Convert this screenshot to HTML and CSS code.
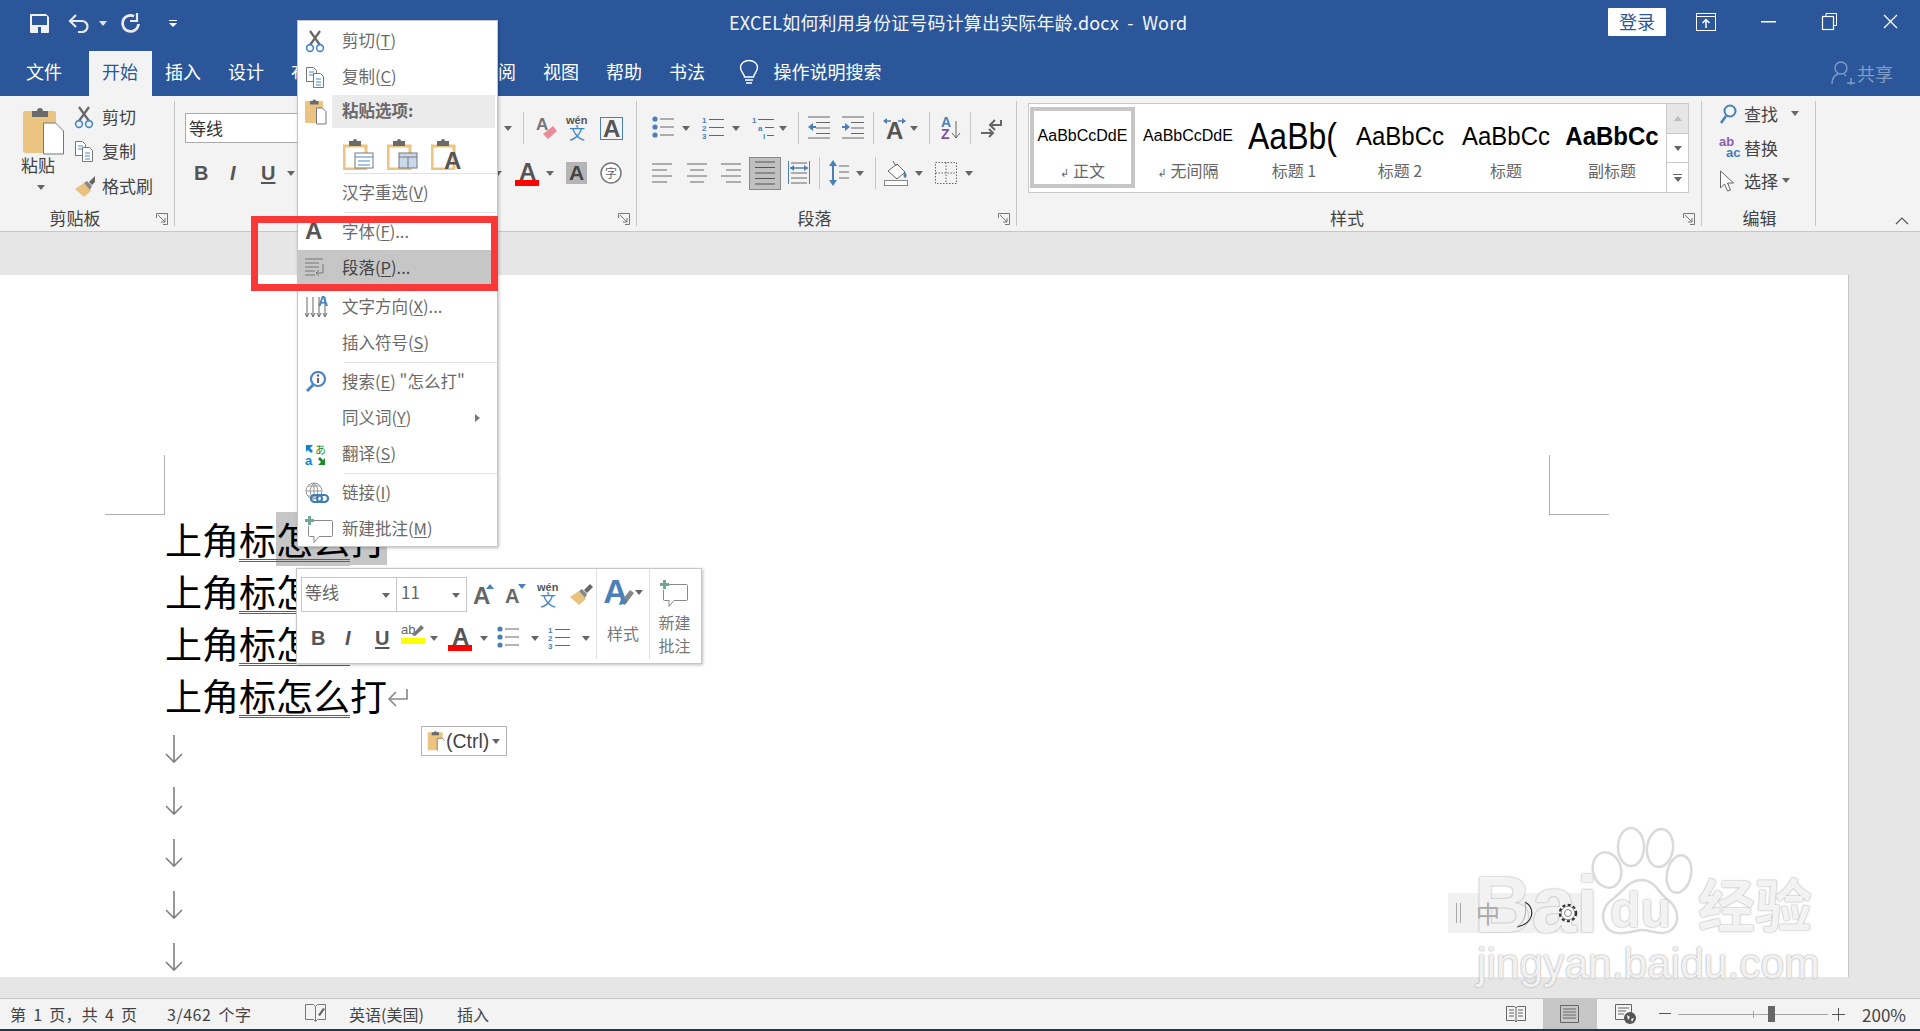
FILE: index.html
```html
<!DOCTYPE html>
<html lang="zh-CN">
<head>
<meta charset="utf-8">
<title>Word</title>
<link rel="stylesheet" href="styles.css">
</head>
<body>
<svg class="defs" width="0" height="0" aria-hidden="true">
  <symbol id="cut"><path d="M5 1l10 14M15 1L5 15" stroke="#666" stroke-width="2.2" fill="none"/><circle cx="5" cy="18" r="3.4" fill="none" stroke="#4a86c5" stroke-width="1.6"/><circle cx="15" cy="18" r="3.4" fill="none" stroke="#4a86c5" stroke-width="1.6"/></symbol>
  <symbol id="copy"><path d="M1.5 1.5h7l3 3v11h-10z" fill="#fff" stroke="#777"/><path d="M4 6h5M4 9h5" stroke="#4a86c5"/><path d="M8.5 7.5h7l3 3v11h-10z" fill="#fff" stroke="#777"/><path d="M11 13h5M11 16h5M11 19h5" stroke="#4a86c5"/></symbol>
  <symbol id="brush"><path d="M1 14l9-6 7 8-7 6z" fill="#e9c27e"/><path d="M10 8l3-2 5 5-2 4z" fill="#888"/><path d="M15 7l6-6 3 3-6 6z" fill="#666"/></symbol>
  <symbol id="pastebig"><rect x="0" y="6" width="33" height="42" rx="2" fill="#ecc481"/><path d="M9 6h5a3 3 0 0 1 6 0h5v6H9z" fill="#6a6a6a"/><path d="M20.5 18h12l8 8v23h-20z" fill="#fff" stroke="#777"/></symbol>
  <symbol id="pastesm"><rect x="0" y="3" width="18" height="22" rx="1" fill="#ecc481"/><path d="M5 3h2.500a1.800 1.800 0 0 1 3.500 0h2.500v3.500H5z" fill="#6a6a6a"/><path d="M11.500 10h6l3.500 3.500V26h-9.500z" fill="#fff" stroke="#777"/></symbol>
  <symbol id="pclip"><path d="M1 10h22v22a1 1 0 0 1-1 1H2a1 1 0 0 1-1-1z" fill="none" stroke="#ecc481" stroke-width="3"/><path d="M6 5h4a2 2 0 0 1 4 0h4v5H6z" fill="#6a6a6a"/></symbol>
  <symbol id="bul"><circle cx="3" cy="3" r="2.600" fill="#4a7fb8"/><circle cx="3" cy="11" r="2.600" fill="#4a7fb8"/><circle cx="3" cy="19" r="2.600" fill="#4a7fb8"/><path d="M8 3h14M8 11h14M8 19h14" stroke="#666"/></symbol>
  <symbol id="numl"><path d="M7 3.500h15M7 11.500h15M7 19.500h15" stroke="#666"/></symbol>
  <symbol id="inddec"><path d="M0 1h22M8 6.500h14M8 12h14M8 17.500h14M0 22h22" stroke="#666"/><path d="M0 11l5-4v3h3v2H5v3z" fill="#4a7fb8"/></symbol>
  <symbol id="indinc"><path d="M0 1h22M9 6.500h13M9 12h13M9 17.500h13M0 22h22" stroke="#666"/><path d="M8 11l-5-4v3H0v2h3v3z" fill="#4a7fb8"/></symbol>
  <symbol id="pil"><path d="M20 2v5H10" fill="none" stroke="#666" stroke-width="2"/><path d="M14 2L9 7l5 5" fill="none" stroke="#666" stroke-width="2"/><path d="M0 15h12M8 11l4 4-4 4" fill="none" stroke="#666" stroke-width="2"/></symbol>
  <symbol id="al"><path d="M0 1h20M0 7h15M0 13h20M0 19h15" stroke="#666"/></symbol>
  <symbol id="ac"><path d="M0 1h20M3 7h14M0 13h20M3 19h14" stroke="#666"/></symbol>
  <symbol id="ar"><path d="M0 1h20M5 7h15M0 13h20M5 19h15" stroke="#666"/></symbol>
  <symbol id="aj"><path d="M0 1h20M0 6.500h20M0 12h20M0 17.500h20M0 23h20" stroke="#555"/></symbol>
  <symbol id="ad"><path d="M.500 0v23M21.500 0v23" stroke="#4a7fb8"/><path d="M3 2h16M3 12h16M3 17h16M3 22h16" stroke="#666"/><path d="M2 7h18" stroke="#4a7fb8" stroke-width="1.500"/><path d="M2 7l4-3v6zM20 7l-4-3v6z" fill="#4a7fb8"/></symbol>
  <symbol id="ls"><path d="M5 3v20" stroke="#4a7fb8" stroke-width="2"/><path d="M5 0L1 6h8zM5 26L1 20h8z" fill="#4a7fb8"/><path d="M11 6h10M11 12h10M11 18h10" stroke="#666"/></symbol>
  <symbol id="shade"><path d="M4 11l9-7 8 8-8 7z" fill="#fff" stroke="#666"/><path d="M9 1l3 5" stroke="#666"/><path d="M21 12c2 2 2 5 0 6-2-1-2-4 0-6z" fill="#4a7fb8"/><rect x=".500" y="20.500" width="23" height="5" fill="#fff" stroke="#888"/></symbol>
  <symbol id="bord"><path d="M.500.500h21v21H.500zM11 .500v21M.500 11h21" fill="none" stroke="#666" stroke-dasharray="1.500 1.500"/></symbol>
  <symbol id="find"><circle cx="11" cy="7" r="5.500" fill="none" stroke="#4a7fb8" stroke-width="2"/><path d="M7 12l-5 7" stroke="#4a7fb8" stroke-width="2.500"/></symbol>
  <symbol id="cursor"><path d="M1.500 1v17l4-4 3 7 3-1-3-7h6z" fill="#fff" stroke="#666"/></symbol>
  <symbol id="comment"><path d="M7.500 4.500h19a1 1 0 0 1 1 1v14a1 1 0 0 1-1 1H14l-5 6v-6H4.500a1 1 0 0 1-1-1V10" fill="#fff" stroke="#888"/><path d="M3 0h3v3h3v3H6v3H3V6H0V3h3z" fill="#6fa897"/></symbol>
  <symbol id="parai"><path d="M0 1h18M0 5h14M0 9h14M0 13h10M0 17h10" stroke="#777"/><path d="M18 6v9h-7" fill="none" stroke="#777"/><path d="M14 12l-3 3 3 3" fill="none" stroke="#777"/></symbol>
  <symbol id="dirl"><path d="M2 2v19M8 2v19M14 2v19M20 2v19" stroke="#666"/><path d="M0 18l2 4 2-4M6 18l2 4 2-4M12 18l2 4 2-4M18 18l2 4 2-4" fill="none" stroke="#666"/></symbol>
  <symbol id="info"><circle cx="13" cy="8" r="7" fill="#fff" stroke="#4a86c5" stroke-width="2.200"/><path d="M8 14l-6 6" stroke="#4a86c5" stroke-width="3"/><path d="M13 7v5" stroke="#666" stroke-width="2"/><circle cx="13" cy="4.500" r="1.200" fill="#666"/></symbol>
  <symbol id="link"><circle cx="9" cy="9" r="8" fill="#fff" stroke="#999"/><path d="M1 9h16M9 1v16M3 4h12M3 14h12" stroke="#999"/><path d="M9 1c-5 5-5 11 0 16M9 1c5 5 5 11 0 16" fill="none" stroke="#999"/><rect x="6" y="13" width="11" height="7" rx="3.500" fill="none" stroke="#3f7cb8" stroke-width="2.200"/><rect x="12" y="13" width="11" height="7" rx="3.500" fill="none" stroke="#3f7cb8" stroke-width="2.200"/></symbol>
  <symbol id="return"><path d="M20 1v10H2" fill="none" stroke="#888" stroke-width="1.600"/><path d="M9 4l-7 7 7 7" fill="none" stroke="#888" stroke-width="1.600"/></symbol>
  <symbol id="down"><path d="M9 0v27M1 19l8 8 8-8" fill="none" stroke="#808080" stroke-width="1.600"/></symbol>
  <symbol id="launcher"><path d="M.5 5V.5h11v11H7M2 2l7 7M9 5v4H5" fill="none" stroke="#777"/></symbol>
</svg>

<header class="titlebar">
  <div class="qat">
    <svg class="qat-save" width="20" height="20"><path d="M1 0h15l3 3v15a1 1 0 0 1-1 1H1a1 1 0 0 1-1-1V1a1 1 0 0 1 1-1z" fill="#f1f1f1"/><rect x="2" y="2" width="15" height="9" fill="#2b579a"/><rect x="8" y="13" width="3" height="6" fill="#2b579a"/></svg>
    <svg class="qat-undo" width="22" height="20"><path d="M3 7h11a5.500 5.500 0 0 1 0 11h-4" fill="none" stroke="#e9e9e9" stroke-width="2.200"/><path d="M8 1L2 7l6 6" fill="none" stroke="#e9e9e9" stroke-width="2.200"/></svg>
    <i class="dd dd-w qat-arrow"></i>
    <svg class="qat-redo" width="21" height="21"><path d="M14 3.200A8 8 0 1 0 18.500 11" fill="none" stroke="#e9e9e9" stroke-width="2.800"/><path d="M17 0v8h-7" fill="none" stroke="#e9e9e9" stroke-width="2.200"/></svg>
    <svg class="qat-custom" width="10" height="8"><path d="M1 .5h8" stroke="#fff"/><path d="M1 3l4 4 4-4z" fill="#fff"/></svg>
  </div>
  <div class="doc-title">EXCEL如何利用身份证号码计算出实际年龄.docx &nbsp;-&nbsp; Word</div>
  <div class="win">
    <button class="login">登录</button>
    <svg class="win-ribbon" width="20" height="18"><rect x=".5" y=".5" width="19" height="17" fill="none" stroke="#fff"/><path d="M0 3.500h20" stroke="#fff"/><path d="M10 15V7M6.500 10L10 6.500l3.500 3.500" fill="none" stroke="#fff" stroke-width="1.500"/></svg>
    <svg class="win-min" width="15" height="2"><rect width="15" height="1.500" fill="#fff"/></svg>
    <svg class="win-max" width="15" height="17"><path d="M4 3V.5h10.500v12H12" fill="none" stroke="#fff"/><rect x=".5" y="3.500" width="11" height="13" fill="none" stroke="#fff" stroke-width="1.200"/></svg>
    <svg class="win-close" width="15" height="15"><path d="M1 1l13 13M14 1L1 14" stroke="#fff" stroke-width="1.300"/></svg>
  </div>
</header>

<nav class="tabs">
  <span class="tab tab-file">文件</span>
  <span class="tab tab-on">开始</span>
  <span class="tab">插入</span>
  <span class="tab">设计</span>
  <span class="tab">布局</span>
  <span class="tab">引用</span>
  <span class="tab">邮件</span>
  <span class="tab">审阅</span>
  <span class="tab">视图</span>
  <span class="tab">帮助</span>
  <span class="tab">书法</span>
  <svg class="bulb" width="20" height="25"><path d="M5.500 17c0-3-4-5-4-9.500a8.500 7 0 0 1 17 0C18.500 12 14.500 14 14.500 17z" fill="none" stroke="#fff" stroke-width="1.400"/><path d="M6 20h8M7 23h6" stroke="#fff" stroke-width="1.600"/></svg>
  <span class="tell">操作说明搜索</span>
  <span class="share"><svg width="24" height="25"><circle cx="10" cy="8" r="6" fill="none" stroke="#7f9cc7" stroke-width="1.400"/><path d="M1 24c0-6 3-9 6-10M13 14l2 2M16 23h8M20 18v7" fill="none" stroke="#7f9cc7" stroke-width="1.400"/></svg>共享</span>
</nav>

<section class="ribbon">
  <div class="group g-clip">
    <div class="body clip-body">
      <div class="paste">
        <svg width="42" height="50"><use href="#pastebig"/></svg>
        <span>粘贴</span>
        <i class="dd paste-dd"></i>
      </div>
      <div class="clip-list">
        <div class="clip-item"><svg width="21" height="23"><use href="#cut"/></svg><span>剪切</span></div>
        <div class="clip-item"><svg width="21" height="23"><use href="#copy"/></svg><span>复制</span></div>
        <div class="clip-item"><svg width="24" height="23"><use href="#brush"/></svg><span>格式刷</span></div>
      </div>
    </div>
    <div class="gl"><span>剪贴板</span><svg class="launch" width="12" height="12"><use href="#launcher"/></svg></div>
  </div>

  <div class="group g-font">
    <div class="body">
      <div class="row">
        <span class="combo combo-font">等线</span>
        <span class="combo combo-size">11</span>
        <span class="t w30"><svg width="24" height="24"><text x="0" y="19" class="abig">A</text></svg></span>
        <span class="t w30"><svg width="24" height="24"><text x="0" y="19" class="abig">A</text></svg></span>
        <span class="t w34"><svg width="24" height="24"><text x="3" y="23" class="abig">A</text><path d="M1 5h7M15 5h7" stroke="#4a7fb8" stroke-width="1.500"/><path d="M0 5l4-3v6zM23 5l-4-3v6z" fill="#4a7fb8"/></svg></span>
        <span class="t w47"></span>
        <span class="t w19"><i class="dd"></i></span>
        <span class="t w13"><i class="vs"></i></span>
        <span class="t w30"><svg width="24" height="26"><text x="0" y="15" class="agray">A</text><path d="M7 19l10-8 4 5-9 8z" fill="#ec8b98"/></svg></span>
        <span class="t w34"><svg width="24" height="26"><text x="0" y="9" class="wn">wén</text><text x="3" y="24" class="wz">文</text></svg></span>
        <span class="t w30"><svg width="23" height="23"><rect x=".500" y=".500" width="22" height="22" fill="none" stroke="#4a7fb8"/><text x="3" y="20" class="abig">A</text></svg></span>
      </div>
      <div class="row row2-font">
        <b class="t w36 fmt">B</b>
        <em class="t w31 fmt">I</em>
        <u class="t w26 fmt">U</u>
        <span class="t w20"><i class="dd"></i></span>
        <span class="t w187"></span>
        <span class="t w21"><i class="dd"></i></span>
        <span class="t w31"><svg width="24" height="25"><text x="4" y="19" class="abig">A</text><rect x="0" y="19" width="24" height="6" fill="#f00"/></svg></span>
        <span class="t w20"><i class="dd"></i></span>
        <span class="t w34"><span class="ah">A</span></span>
        <span class="t w30"><svg width="23" height="23"><circle cx="11" cy="11" r="10" fill="#fff" stroke="#777" stroke-width="1.500"/><text x="5" y="16" class="wz2">字</text></svg></span>
      </div>
    </div>
    <div class="gl"><span>字体</span><svg class="launch" width="12" height="12"><use href="#launcher"/></svg></div>
  </div>

  <div class="group g-para">
    <div class="body">
      <div class="row">
        <span class="t w30"><svg width="24" height="24"><use href="#bul"/></svg></span>
        <span class="t w20"><i class="dd"></i></span>
        <span class="t w30"><svg width="24" height="24"><use href="#numl"/><text x="0" y="7" class="mini">1</text><text x="0" y="15" class="mini">2</text><text x="0" y="23" class="mini">3</text></svg></span>
        <span class="t w20"><i class="dd"></i></span>
        <span class="t w27"><svg width="24" height="24"><path d="M6 3.500h16M13 11.500h9M15 19.500h7" stroke="#666"/><text x="0" y="7" class="mini">1</text><text x="6" y="15" class="mini">a</text><text x="11" y="23" class="mini">i</text></svg></span>
        <span class="t w19"><i class="dd"></i></span>
        <span class="t w10"><i class="vs"></i></span>
        <span class="t w34"><svg width="23" height="24"><use href="#inddec"/></svg></span>
        <span class="t w31"><svg width="23" height="24"><use href="#indinc"/></svg></span>
        <span class="t w10"><i class="vs"></i></span>
        <span class="t w27"><svg width="24" height="24"><text x="3" y="23" class="abig">A</text><path d="M1 5h7M15 5h7" stroke="#4a7fb8" stroke-width="1.500"/><path d="M0 5l4-3v6zM23 5l-4-3v6z" fill="#4a7fb8"/></svg></span>
        <span class="t w19"><i class="dd"></i></span>
        <span class="t w12"><i class="vs"></i></span>
        <span class="t w29"><svg width="20" height="24"><text x="0" y="11" class="azb">A</text><text x="0" y="23" class="azp">Z</text><path d="M15 5v17M11 17l4 5 4-5" fill="none" stroke="#666"/></svg></span>
        <span class="t w11"><i class="vs"></i></span>
        <span class="t w24"><svg width="22" height="20"><use href="#pil"/></svg></span>
      </div>
      <div class="row">
        <span class="t w35"><svg width="21" height="20"><use href="#al"/></svg></span>
        <span class="t w34"><svg width="21" height="20"><use href="#ac"/></svg></span>
        <span class="t w28"><svg width="21" height="20"><use href="#ar"/></svg></span>
        <span class="t w39"><span class="just"><svg width="21" height="24"><use href="#aj"/></svg></span></span>
        <span class="t w31"><svg width="22" height="24"><use href="#ad"/></svg></span>
        <span class="t w9"><i class="vs"></i></span>
        <span class="t w28"><svg width="22" height="26"><use href="#ls"/></svg></span>
        <span class="t w19"><i class="dd"></i></span>
        <span class="t w9"><i class="vs"></i></span>
        <span class="t w31"><svg width="25" height="26"><use href="#shade"/></svg></span>
        <span class="t w20"><i class="dd"></i></span>
        <span class="t w30"><svg width="23" height="23"><use href="#bord"/></svg></span>
        <span class="t w14"><i class="dd"></i></span>
      </div>
    </div>
    <div class="gl"><span>段落</span><svg class="launch" width="12" height="12"><use href="#launcher"/></svg></div>
  </div>

  <div class="group g-style">
    <div class="body">
      <div class="gallery">
        <div class="style style-on"><span class="sample s16">AaBbCcDdE</span><span class="slabel"><i class="ret">↲</i> 正文</span></div>
        <div class="style"><span class="sample s16">AaBbCcDdE</span><span class="slabel"><i class="ret">↲</i> 无间隔</span></div>
        <div class="style"><span class="sample s32">AaBb(</span><span class="slabel">标题 1</span></div>
        <div class="style"><span class="sample s24">AaBbCc</span><span class="slabel">标题 2</span></div>
        <div class="style"><span class="sample s24">AaBbCc</span><span class="slabel">标题</span></div>
        <div class="style"><span class="sample s24b">AaBbCc</span><span class="slabel">副标题</span></div>
        <div class="gscroll">
          <span class="gbtn gbtn-up"><i class="up"></i></span>
          <span class="gbtn"><i class="dd"></i></span>
          <span class="gbtn gbtn-more"><i class="more"></i><i class="dd"></i></span>
        </div>
      </div>
    </div>
    <div class="gl"><span>样式</span><svg class="launch" width="12" height="12"><use href="#launcher"/></svg></div>
  </div>

  <div class="group g-edit">
    <div class="body edit-body">
      <div class="edit-item"><span class="edit-ic"><svg width="20" height="20"><use href="#find"/></svg></span><span>查找</span><i class="dd edit-dd"></i></div>
      <div class="edit-item"><span class="edit-ic rep"><span class="rep-ab">ab</span><span class="rep-ac">ac</span></span><span>替换</span></div>
      <div class="edit-item"><span class="edit-ic"><svg width="17" height="22"><use href="#cursor"/></svg></span><span>选择</span><i class="dd edit-dd2"></i></div>
    </div>
    <div class="gl gl-edit"><span>编辑</span></div>
  </div>

  <svg class="collapse" width="14" height="8"><path d="M1 7l6-6 6 6" fill="none" stroke="#555" stroke-width="1.200"/></svg>
</section>

<main class="doc">
  <div class="page">
    <div class="crops"><i class="crop crop-l"></i><i class="crop crop-r"></i></div>
    <div class="lines">
      <p class="line">上角<span class="spell">标<span class="sel">怎么</span></span><span class="sel">打</span></p>
      <p class="line">上角<span class="spell">标怎么</span>打</p>
      <p class="line">上角<span class="spell">标怎么</span>打</p>
      <p class="line">上角<span class="spell">标怎么</span>打<svg class="ret-mark" width="22" height="19"><use href="#return"/></svg></p>
    </div>
    <p class="empty"><svg width="18" height="29"><use href="#down"/></svg></p>
    <p class="empty"><svg width="18" height="29"><use href="#down"/></svg></p>
    <p class="empty"><svg width="18" height="29"><use href="#down"/></svg></p>
    <p class="empty"><svg width="18" height="29"><use href="#down"/></svg></p>
    <p class="empty"><svg width="18" height="29"><use href="#down"/></svg></p>
  </div>
</main>

<footer class="status">
  <span class="st st-page">第 1 页，共 4 页</span>
  <span class="st st-count">3/462 个字</span>
  <svg class="st-book" width="21" height="20"><path d="M.5 1.500h8l2 2 2-2h8v15h-8l-2 2-2-2h-8zM10.500 3.500v15" fill="none" stroke="#777"/><path d="M13 12l5-7 2 1-5 7z" fill="#666"/></svg>
  <span class="st st-lang">英语(美国)</span>
  <span class="st st-ins">插入</span>
  <div class="st-right">
    <svg class="v-read" width="20" height="18"><path d="M.5 1.500h8l1.500 1.500 1.500-1.500h8v14h-8l-1.500 1.500-1.500-1.500h-8zM10 3v14M3 5h5M3 8h5M3 11h5M12 5h5M12 8h5M12 11h5" fill="none" stroke="#666"/></svg>
    <span class="v-print"><svg width="20" height="18"><path d="M.5.5h18v17H.5zM3 4h13M3 7h13M3 10h13M3 13h13" fill="none" stroke="#666"/></svg></span>
    <svg class="v-web" width="21" height="20"><path d="M.5.5h16v15H.5zM3 4h11M3 7h8M3 10h6" fill="none" stroke="#666"/><circle cx="15" cy="14" r="6" fill="#555"/><path d="M12 11l3 2-2 3zM16 15l3-1-2 4z" fill="#fff"/></svg>
    <svg class="z-minus" width="12" height="2"><rect width="12" height="1" fill="#555"/></svg>
    <span class="slider"><i class="tick"></i><i class="thumb"></i></span>
    <svg class="z-plus" width="13" height="13"><path d="M0 6.500h13M6.500 0v13" stroke="#555"/></svg>
    <span class="st st-zoom">200%</span>
  </div>
</footer>
<div class="taskline"></div>

<!-- floating: IME bar (back), watermark, IME glyphs (front) -->
<div class="ime"><i class="ime-grip"></i></div>
<div class="wm">
  <span class="wm-bai">Bai</span>
  <svg class="wm-paw" width="100" height="112"><g fill="#fff" stroke="#dadada" stroke-width="2.500"><ellipse cx="17" cy="44" rx="14" ry="18" transform="rotate(-15 17 44)"/><ellipse cx="41" cy="21" rx="13" ry="19"/><ellipse cx="70" cy="22" rx="13" ry="19" transform="rotate(8 70 22)"/><ellipse cx="89" cy="48" rx="12" ry="19" transform="rotate(12 89 48)"/><path d="M52 54c12 0 16 12 26 20 14 10 12 32-6 33-8 0-14-3-20-3s-14 4-24 3C12 106 6 84 24 72c10-7 14-18 28-18z"/></g></svg>
  <span class="wm-du">du</span>
  <span class="wm-jy">经验</span>
  <span class="wm-url">jingyan.baidu.com</span>
</div>
<div class="ime-fg">
  <span class="ime-zh">中</span>
  <svg class="ime-moon" width="22" height="28"><path d="M9 1c10 6 10 21-8 25" fill="none" stroke="#222" stroke-width="1.100"/><path d="M9 1c2 10 0 20-8 25" fill="none" stroke="#aaa"/></svg>
  <svg class="ime-gear" width="24" height="24"><circle cx="12" cy="12" r="8" fill="#fff" stroke="#333" stroke-width="2.500" stroke-dasharray="3 2.300"/><circle cx="12" cy="12" r="6.800" fill="#fff" stroke="#888"/><circle cx="12" cy="12" r="3.500" fill="none" stroke="#888"/></svg>
</div>

<!-- floating: mini toolbar -->
<div class="mt">
  <div class="mt-main">
    <div class="mt-row">
      <span class="mt-combo mt-font">等线<i class="dd"></i></span>
      <span class="mt-combo mt-size">11<i class="dd"></i></span>
      <span class="mt-a"><span class="mt-A">A</span><i class="tri-up"></i></span>
      <span class="mt-a"><span class="mt-A mt-A2">A</span><i class="tri-dn"></i></span>
      <span class="t w32"><svg width="24" height="26"><text x="0" y="9" class="wn">wén</text><text x="3" y="24" class="wz">文</text></svg></span>
      <span class="t w24"><svg width="24" height="23"><use href="#brush"/></svg></span>
    </div>
    <div class="mt-row mt-row2">
      <b class="t w34 fmt">B</b>
      <em class="t w30 fmt">I</em>
      <u class="t w26 fmt">U</u>
      <span class="t w29 hl"><span class="hl-ab">ab</span><svg width="16" height="14"><path d="M2 12L11 2l3 3-9 8z" fill="#777"/></svg><i class="hl-bar"></i></span>
      <span class="t w18"><i class="dd"></i></span>
      <span class="t w32"><svg width="24" height="25"><text x="4" y="19" class="abig">A</text><rect x="0" y="19" width="24" height="6" fill="#f00"/></svg></span>
      <span class="t w17"><i class="dd"></i></span>
      <span class="t w34"><svg width="24" height="24"><use href="#bul"/></svg></span>
      <span class="t w17"><i class="dd"></i></span>
      <span class="t w34"><svg width="24" height="24"><use href="#numl"/><text x="0" y="7" class="mini">1</text><text x="0" y="15" class="mini">2</text><text x="0" y="23" class="mini">3</text></svg></span>
      <span class="t w14"><i class="dd"></i></span>
    </div>
  </div>
  <div class="mt-big mt-style">
    <div class="mt-style-ic"><span class="mt-bigA">A</span><svg width="18" height="24"><path d="M1 22l10-13 4 3-9 12z" fill="#888"/><path d="M0 24c1-5 3-7 6-6s2 5-6 6z" fill="#4a7fb8"/></svg><i class="dd"></i></div>
    <span>样式</span>
  </div>
  <div class="mt-big mt-cmt">
    <svg width="30" height="28"><use href="#comment"/></svg>
    <span>新建<br>批注</span>
  </div>
</div>

<!-- floating: context menu -->
<div class="menu">
  <div class="mi"><span class="mic"><svg width="21" height="23"><use href="#cut"/></svg></span>剪切(<u>T</u>)</div>
  <div class="mi"><span class="mic"><svg width="21" height="23"><use href="#copy"/></svg></span>复制(<u>C</u>)</div>
  <div class="mi mi-head"><span class="mic mic-head"><svg width="22" height="27"><use href="#pastesm"/></svg></span><span class="head-text">粘贴选项:</span></div>
  <div class="paste-row">
    <svg width="30" height="34"><use href="#pclip"/><rect x="12" y="17" width="18" height="15" fill="#fff" stroke="#777"/><path d="M12 21h18M15 25h12M15 29h12" stroke="#4a86c5"/></svg>
    <svg width="30" height="34"><use href="#pclip"/><rect x="12" y="17" width="18" height="15" fill="#c9d8ea" stroke="#777"/><path d="M12 21h18M21 21v11" stroke="#777"/></svg>
    <svg width="30" height="34"><use href="#pclip"/><text x="13" y="33" class="abig">A</text></svg>
  </div>
  <i class="msep"></i>
  <div class="mi"><span class="mic"></span>汉字重选(<u>V</u>)</div>
  <i class="msep"></i>
  <div class="mi"><span class="mic"><svg width="18" height="20"><text x="0" y="17" class="abig">A</text></svg></span>字体(<u>F</u>)...</div>
  <div class="mi mi-on"><span class="mic"><svg width="20" height="20"><use href="#parai"/></svg></span>段落(<u>P</u>)...</div>
  <i class="msep"></i>
  <div class="mi"><span class="mic"><svg width="24" height="24"><use href="#dirl"/><text x="13" y="11" class="azb">A</text></svg></span>文字方向(<u>X</u>)...</div>
  <div class="mi"><span class="mic"></span>插入符号(<u>S</u>)</div>
  <i class="msep"></i>
  <div class="mi"><span class="mic"><svg width="24" height="23"><use href="#info"/></svg></span>搜索(<u>E</u>) "怎么打"</div>
  <div class="mi"><span class="mic"></span>同义词(<u>Y</u>)<i class="sub"></i></div>
  <div class="mi"><span class="mic"><svg width="22" height="23"><path d="M1 2h7L5 5l3 3-2 2-3-3-2 2z" fill="#0b84d8"/><text x="10" y="11" class="tg">あ</text><text x="0" y="22" class="tb">a</text><path d="M20 22h-7l3-3-3-3 2-2 3 3 2-2z" fill="#1f8a2c"/></svg></span>翻译(<u>S</u>)</div>
  <i class="msep"></i>
  <div class="mi"><span class="mic"><svg width="24" height="23"><use href="#link"/></svg></span>链接(<u>I</u>)</div>
  <div class="mi"><span class="mic"><svg width="28" height="27"><use href="#comment"/></svg></span>新建批注(<u>M</u>)</div>
</div>

<div class="redbox"></div>

<!-- floating: paste options -->
<div class="pastectl"><svg width="22" height="27"><use href="#pastesm"/></svg><span>(Ctrl)</span><i class="dd"></i></div>
</body>
</html>
```
FILE: styles.css
```css
* { box-sizing: border-box; }
html, body { margin: 0; padding: 0; }
body {
  position: relative;
  width: 1920px;
  height: 1031px;
  overflow: hidden;
  background: #e6e6e6;
  font-family: "Noto Sans CJK SC", "Liberation Sans", sans-serif;
  color: #444;
  font-size: 16px;
}
.defs { position: absolute; }
i, em { font-style: normal; }
svg { display: block; flex: none; overflow: visible; }

.mini { font: 700 8px "Liberation Sans", sans-serif; fill: #4a7fb8; }
.abig { font: 700 24px "Liberation Sans", sans-serif; fill: #555; }
.azb { font: 700 14px "Liberation Sans", sans-serif; fill: #4a7fb8; }
.azp { font: 700 14px "Liberation Sans", sans-serif; fill: #7b4fa3; }
.agray { font: 700 17px "Liberation Sans", sans-serif; fill: #777; }
.wn { font: 700 11px "Liberation Sans", sans-serif; fill: #555; }
.wz { font: 400 16px "Noto Sans CJK SC", sans-serif; fill: #3f87c5; }
.wz2 { font: 400 12px "Noto Sans CJK SC", sans-serif; fill: #666; }
.tg { font: 400 11px "Noto Sans CJK SC", sans-serif; fill: #1f8a2c; }
.tb { font: 700 13px "Liberation Sans", sans-serif; fill: #0b84d8; }

.dd { display: block; width: 0; height: 0; border: 4.5px solid transparent; border-top: 5px solid #666; border-bottom: 0; flex: none; }
.dd-w { border-top-color: #dfe6f1; }

/* title bar */
.titlebar { display: flex; height: 51px; background: #2b579a; color: #fff; }
.qat { width: 729px; display: flex; align-items: center; position: relative; }
.qat-save { margin-left: 30px; margin-top: -4px; }
.qat-undo { margin-left: 18px; margin-top: -4px; }
.qat-arrow { margin-left: 9px; margin-top: -4px; }
.qat-redo { margin-left: 13px; margin-top: -4px; }
.qat-custom { margin-left: 27px; margin-top: -4px; }
.doc-title { font-size: 18px; line-height: 44px; white-space: nowrap; width: 600px; color: #f3f5f9; letter-spacing: .16px; }
.win { flex: 1; display: flex; align-items: center; }
.login { margin-left: 279px; width: 58px; height: 28px; margin-top: -7px; padding: 0 0 2px; border: 0; border-radius: 1px; background: #fff; color: #2b579a; font: 18px "Noto Sans CJK SC", sans-serif; line-height: 26px; }
.win-ribbon { margin-left: 30px; margin-top: -8px; }
.win-min { margin-left: 45px; margin-top: -8px; }
.win-max { margin-left: 46px; margin-top: -8px; }
.win-close { margin-left: 46px; margin-top: -8px; }

/* tabs */
.tabs { display: flex; align-items: center; height: 45px; background: #2b579a; color: #fff; font-size: 18px; }
.tab { height: 45px; line-height: 41px; padding: 0 13.5px; white-space: nowrap; }
.tab-file { padding: 0 26.5px 0 26px; }
.tab-on { background: #f3f3f3; color: #2b579a; }
.bulb { margin-left: 20px; margin-top: -2px; }
.tell { margin-left: 15px; line-height: 41px; height: 45px; font-size: 18px; }
.share { margin-left: auto; margin-right: 27px; display: flex; align-items: center; gap: 2px; color: #7f9cc7; font-size: 18px; margin-top: -2px; }

/* ribbon */
.ribbon { display: flex; height: 136px; background: #f3f3f3; border-bottom: 1px solid #c6c6c6; position: relative; }
.group { display: flex; flex-direction: column; margin: 5px 0 5px; border-right: 1px solid #c6c6c6; padding-top: 7px; font-size: 17px; }
.g-clip { width: 175px; }
.g-font { width: 462px; padding-left: 10px; }
.g-para { width: 380px; padding-left: 15px; }
.g-style { width: 685px; padding-left: 11px; padding-top: 2px; }
.g-edit { width: 114px; }
.body { flex: 1; min-height: 0; }
.gl { display: flex; align-items: center; height: 16px; font-size: 17px; line-height: 14px; white-space: nowrap; }
.gl span { flex: 1; text-align: center; }
.launch { width: 12px; margin: 2px 6px 0; }
.gl-edit span { padding-left: 2px; }
.g-font .gl { margin-left: -10px; }
.g-para .gl { margin-left: -15px; }
.g-style .gl { margin-left: -11px; }

.clip-body { display: flex; }
.paste { width: 74px; padding-left: 23px; display: flex; flex-direction: column; }
.paste span { margin-left: -2px; line-height: 26px; margin-top: -3px; white-space: nowrap; }
.paste svg { margin-top: -3px; }
.paste-dd { margin: 7px 0 0 14px; }
.clip-list { display: flex; flex-direction: column; margin-top: -8px; }
.clip-item { display: flex; align-items: center; height: 34.5px; gap: 7px; white-space: nowrap; }
.clip-item svg { width: 21px; }
.clip-item span { margin-top: -2px; }

.row { display: flex; align-items: center; height: 40px; margin-bottom: 5px; }
.row:last-child { margin-bottom: 0; }
.t { display: flex; align-items: center; justify-content: flex-start; height: 100%; flex: none; position: relative; }
.w9 { width: 9px; } .w10 { width: 10px; } .w11 { width: 11px; } .w12 { width: 12px; } .w13 { width: 13px; }
.w14 { width: 14px; } .w15 { width: 15px; } .w16 { width: 16px; } .w17 { width: 17px; } .w18 { width: 18px; }
.w19 { width: 19px; } .w20 { width: 20px; } .w21 { width: 21px; }
.w22 { width: 22px; } .w24 { width: 24px; } .w26 { width: 26px; } .w27 { width: 27px; } .w28 { width: 28px; }
.w29 { width: 29px; } .w30 { width: 30px; } .w31 { width: 31px; } .w32 { width: 32px; }
.w33 { width: 33px; } .w34 { width: 34px; } .w35 { width: 35px; } .w36 { width: 36px; } .w39 { width: 39px; }
.w47 { width: 47px; } .w187 { width: 187px; }
.vs { display: block; width: 1px; height: 32px; background: #c6c6c6; }

.combo { display: flex; align-items: center; height: 30px; background: #fff; border: 1px solid #ababab; padding: 0 0 2px 3px; font-size: 17px; color: #333; flex: none; }
.combo-font { width: 115px; }
.combo-size { width: 55px; margin-right: 8px; }
.row2-font { padding-left: 9px; }
.fmt { font: 700 20px "Liberation Sans", sans-serif; color: #555; }
em.fmt { font-style: italic; }
u.fmt { text-decoration: underline; text-underline-offset: 2px; }
.ah { display: block; width: 21px; height: 22px; background: #b5b5b5; text-align: center; font: 700 21px/22px "Liberation Sans", sans-serif; color: #444; }
.just { display: flex; align-items: center; justify-content: center; width: 32px; height: 33px; background: #c0c0c0; border: 1px solid #8a8a8a; }

/* gallery */
.gallery { display: flex; width: 661px; height: 90px; background: #fff; border: 1px solid #c9c9c9; padding: 3px 0 0 1px; position: relative; }
.style { width: 106px; height: 81px; display: flex; flex-direction: column; align-items: center; overflow: hidden; white-space: nowrap; padding: 4px 0 0; }
.style-on { outline: 4px solid #c6c6c6; outline-offset: -4px; box-shadow: 0 0 0 1px #9a9a9a inset; width: 105px; }
.sample { height: 44px; width: 92px; overflow: hidden; display: flex; align-items: center; justify-content: center; color: #000; font-family: "Liberation Sans", sans-serif; line-height: 44px; margin-top: 3px; flex: none; }
.s16 { font-size: 16px; }
.s24 { font-size: 24px; transform: scaleY(1.1); }
.s24b { font-size: 24px; font-weight: 700; transform: scaleY(1.1); }
.s32 { font-size: 32px; font-family: "Liberation Sans", sans-serif; transform: scaleY(1.15); justify-content: flex-start; }
.slabel { font-size: 16px; color: #666; line-height: 26px; margin-top: -1px; }
.ret { font-family: "DejaVu Sans", sans-serif; font-size: 11px; }
.gscroll { position: absolute; right: 0; top: 0; bottom: 0; width: 22px; display: flex; flex-direction: column; border-left: 1px solid #c9c9c9; }
.gbtn { flex: 1; display: flex; flex-direction: column; align-items: center; justify-content: center; gap: 2px; border-top: 1px solid #c9c9c9; }
.gbtn-up { background: #e6e6e6; border-top: 0; }
.up { display: block; border: 4.5px solid transparent; border-bottom: 5px solid #bbb; border-top: 0; }
.more { display: block; width: 9px; height: 1px; background: #666; }

/* editing */
.edit-body { padding-left: 17px; margin-top: -11px; }
.edit-item { display: flex; align-items: center; height: 33.5px; white-space: nowrap; }
.edit-ic { width: 25px; flex: none; }
.rep { display: flex; flex-direction: column; font: 700 13px/11px "Liberation Sans", sans-serif; }
.rep-ab { color: #8a5fb0; }
.rep-ac { color: #3f7cb8; padding-left: 7px; }
.edit-dd { margin-left: 13px; }
.edit-dd2 { margin-left: 4px; }
.collapse { align-self: flex-end; margin: 0 0 6px 79px; }

/* document */
.doc { height: 766px; padding-top: 43px; background: #e6e6e6; }
.page { width: 1849px; height: 702px; background: #fff; border-right: 1px solid #c6c6c6; overflow: hidden; padding-top: 180px; }
.crops { display: flex; justify-content: space-between; height: 59px; padding: 0 239px 0 105px; }
.crop { display: block; width: 60px; height: 60px; border-bottom: 1px solid #b0b0b0; }
.crop-l { border-right: 1px solid #b0b0b0; }
.crop-r { border-left: 1px solid #b0b0b0; }
.lines { margin-top: -1px; margin-bottom: 2px; }
.line { margin: 0 0 0 165px; height: 52px; line-height: 52px; font-size: 37px; color: #000; white-space: nowrap; display: flex; align-items: center; }
.spell { text-decoration: underline double #2a62d8; text-decoration-thickness: 1px; text-underline-offset: 4px; }
.sel { background: #c6c6c6; }
.ret-mark { margin-top: 4px; }
.empty { margin: 0 0 0 165px; height: 52px; display: flex; align-items: center; }

/* status bar */
.status { display: flex; align-items: center; height: 31px; background: #f3f3f3; border-top: 1px solid #c6c6c6; position: relative; color: #444; }
.st { white-space: nowrap; font-size: 16px; }
.st-page { margin-left: 10px; width: 157px; word-spacing: 3px; letter-spacing: .3px; }
.st-count { width: 138px; word-spacing: 3px; letter-spacing: .5px; }
.st-lang { margin-left: 23px; width: 108px; }
.st-book { margin-top: -2px; }
.st-right { margin-left: auto; display: flex; align-items: center; height: 100%; }
.v-read { margin-right: 17px; }
.v-print { width: 54px; height: 100%; background: #c6c6c6; display: flex; align-items: center; justify-content: center; }
.v-web { margin-left: 18px; }
.z-minus { margin-left: 23px; }
.slider { position: relative; display: block; width: 150px; height: 1px; margin-left: 7px; background: #a6a6a6; }
.tick { position: absolute; left: 75px; top: -3px; width: 1px; height: 7px; background: #a6a6a6; }
.thumb { position: absolute; left: 90px; top: -8px; width: 7px; height: 16px; background: #666; }
.z-plus { margin-left: 4px; }
.st-zoom { margin: 0 14px 0 17px; font-size: 17px; }
.taskline { height: 2px; background: #1d3a4f; }

/* IME + watermark */
.ime { position: absolute; left: 1448px; top: 893px; width: 145px; height: 40px; background: #f1f1f1; display: flex; align-items: center; }
.ime-grip { display: block; width: 5px; height: 20px; margin-left: 8px; border-left: 1px solid #aaa; border-right: 1px solid #aaa; }
.ime-fg { position: absolute; left: 1476px; top: 893px; height: 40px; display: flex; align-items: center; }
.ime-zh { font-size: 24px; line-height: 30px; color: #aaa; width: 40px; }
.ime-moon { margin-top: 4px; }
.ime-gear { margin-left: 18px; }
.wm { position: absolute; left: 0; top: 0; width: 0; height: 0; }
.wm span { position: absolute; white-space: nowrap; font-family: "Liberation Sans", sans-serif; font-weight: 700; color: rgba(255,255,255,.85); text-shadow: 0 0 1.5px #aaa, 0 0 2px #bbb; }
.wm-bai { left: 1474px; top: 860px; font-size: 80px; line-height: 90px; }
.wm-paw { position: absolute; left: 1590px; top: 826px; }
.wm-du { left: 1610px; top: 883px; font-size: 50px; line-height: 54px; }
.wm .wm-jy { left: 1698px; top: 860px; font-size: 57px; line-height: 84px; font-family: "Noto Sans CJK SC", sans-serif; }
.wm .wm-url { left: 1477px; top: 938px; font-size: 42.5px; line-height: 52px; font-weight: 400; }

/* mini toolbar */
.mt { position: absolute; left: 296px; top: 568px; width: 406px; height: 96px; display: flex; background: #fff; border: 1px solid #c6c6c6; box-shadow: 1px 1px 3px rgba(0,0,0,.25); }
.mt-main { width: 300px; padding: 8px 0 0 4px; border-right: 1px solid #e0e0e0; margin-bottom: 4px; }
.mt-row { display: flex; align-items: center; height: 35px; }
.mt-row2 { height: 40px; margin-top: 6px; padding-left: 10px; }
.mt-combo { display: flex; align-items: center; justify-content: space-between; height: 35px; border: 1px solid #c6c6c6; padding: 0 6px 7px 3px; font-size: 17px; color: #666; }
.mt-combo .dd { margin-top: 8px; }
.mt-font { width: 96px; }
.mt-size { width: 71px; margin-left: -1px; padding-left: 4px; margin-right: 6px; }
.mt-a { position: relative; display: block; width: 32px; height: 30px; }
.mt-A { display: block; font: 700 24px/32px "Liberation Sans", sans-serif; color: #666; }
.mt-A2 { font-size: 20px; }
.tri-up, .tri-dn { position: absolute; left: 13px; top: 4px; border: 4px solid transparent; }
.tri-up { border-bottom: 5px solid #4a7fb8; border-top: 0; }
.tri-dn { border-top: 5px solid #4a7fb8; border-bottom: 0; }
.hl { display: block; }
.hl-ab { position: absolute; left: 0; top: 4px; font: 400 13px "Liberation Sans", sans-serif; color: #666; }
.hl svg { position: absolute; left: 9px; top: 5px; }
.hl-bar { position: absolute; left: 0; top: 20px; width: 24px; height: 6px; background: #ff0; }
.mt-big { display: flex; flex-direction: column; align-items: center; font-size: 16px; color: #777; line-height: 23px; margin-bottom: 4px; }
.mt-style { width: 53px; border-right: 1px solid #e0e0e0; gap: 14px; padding-top: 6px; }
.mt-style-ic { display: flex; align-items: flex-start; height: 33px; position: relative; }
.mt-style-ic .dd { margin-top: 15px; margin-left: -2px; }
.mt-style-ic svg { margin: 6px 0 0 -9px; }
.mt-bigA { font: 700 34px/32px "Liberation Sans", sans-serif; color: #4a7fb8; }
.mt-cmt { flex: 1; padding-top: 11px; gap: 3px; text-align: center; margin-left: -2px; }

/* context menu */
.menu { position: absolute; left: 297px; top: 20px; width: 201px; height: 527px; padding-top: 2px; background: #fff; border: 1px solid #c6c6c6; box-shadow: 1px 1px 3px rgba(0,0,0,.25); font-size: 16.5px; color: #6a6a6a; }
.mi { position: relative; display: flex; align-items: center; height: 36px; white-space: nowrap; padding-bottom: 3px; }
.mi .mic { margin-bottom: -3px; }
.mi u { text-underline-offset: 2px; }
.mic { width: 44px; flex: none; padding-left: 7px; display: flex; }
.mi-on { background: #c6c6c6; color: #444; }
.mi-head { height: 33px; padding-bottom: 0; }
.mi-head .mic { margin-bottom: 0; }
.mic-head { width: 34px; }
.head-text { flex: 1; height: 33px; line-height: 30px; padding-left: 10px; background: #ebebeb; font-weight: 700; margin-right: 2px; }
.paste-row { display: flex; height: 44px; gap: 14px; padding: 8px 0 0 45px; }
.msep { display: block; height: 3px; margin-left: 46px; background: linear-gradient(#e1e1e1, #e1e1e1) no-repeat 0 1px / 100% 1px; }
.sub { position: absolute; right: 17px; top: 14px; border: 4px solid transparent; border-left: 5px solid #777; border-right: 0; }

.redbox { position: absolute; left: 251px; top: 216px; width: 247px; height: 75px; border: 7px solid #fb3838; }

.pastectl { position: absolute; left: 421px; top: 726px; width: 86px; height: 30px; display: flex; align-items: center; background: #fff; border: 1px solid #b4b4b4; padding-left: 4px; font: 19.5px "Liberation Sans", sans-serif; color: #444; white-space: nowrap; }
.pastectl svg { width: 20px; height: 24px; margin-top: -2px; transform: scale(.85); }
.pastectl .dd { margin-left: 3px; }
```
